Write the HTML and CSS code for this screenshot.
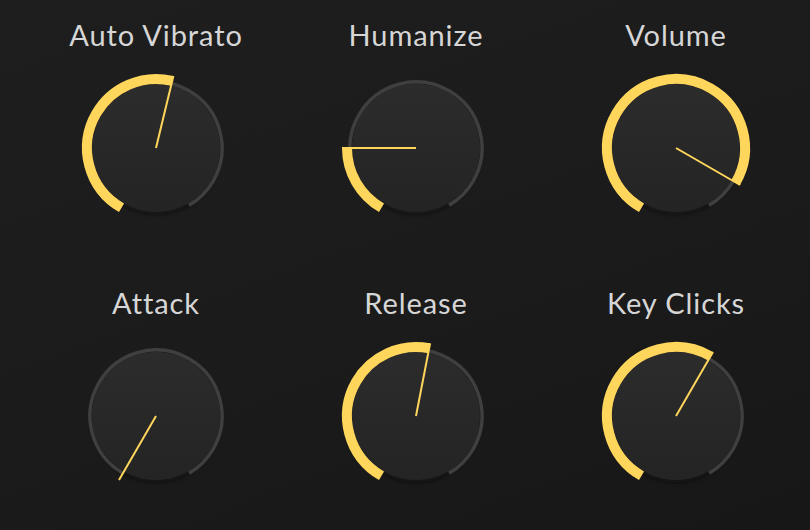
FILE: index.html
```html
<!DOCTYPE html>
<html lang="en">
<head>
  <meta charset="UTF-8">
  <title>Organ controls</title>
  <link rel="stylesheet" href="styles.css">
</head>
<body>
  <svg class="defs" width="0" height="0">
    <defs>
      <linearGradient id="face" x1="0" y1="0" x2="0" y2="1">
        <stop offset="0" stop-color="#2c2c2c"/>
        <stop offset="1" stop-color="#242424"/>
      </linearGradient>
      <filter id="soft" x="-20%" y="-20%" width="140%" height="140%">
        <feGaussianBlur stdDeviation="2"/>
      </filter>
    </defs>
  </svg>

  <div class="panel">
    <!-- value = degrees of the 300° sweep, needle = value - 150 -->
    <div class="knob">
      <div class="label">Auto Vibrato</div>
      <svg class="dial" viewBox="0 0 160 160" width="160" height="160">
        <circle class="shade" cx="80" cy="82" r="64"/>
        <circle class="face" cx="80" cy="80" r="64"/>
        <circle class="track" cx="80" cy="80" r="66" pathLength="360" transform="rotate(120 80 80)"/>
        <circle class="fill" cx="80" cy="80" r="69" pathLength="360" stroke-dasharray="163.6 360" transform="rotate(120 80 80)"/>
        <line class="needle" x1="80" y1="80" x2="80" y2="6" transform="rotate(13.6 80 80)"/>
      </svg>
    </div>

    <div class="knob">
      <div class="label">Humanize</div>
      <svg class="dial" viewBox="0 0 160 160" width="160" height="160">
        <circle class="shade" cx="80" cy="82" r="64"/>
        <circle class="face" cx="80" cy="80" r="64"/>
        <circle class="track" cx="80" cy="80" r="66" pathLength="360" transform="rotate(120 80 80)"/>
        <circle class="fill" cx="80" cy="80" r="69" pathLength="360" stroke-dasharray="60 360" transform="rotate(120 80 80)"/>
        <line class="needle" x1="80" y1="80" x2="80" y2="6" transform="rotate(-90 80 80)"/>
      </svg>
    </div>

    <div class="knob">
      <div class="label">Volume</div>
      <svg class="dial" viewBox="0 0 160 160" width="160" height="160">
        <circle class="shade" cx="80" cy="82" r="64"/>
        <circle class="face" cx="80" cy="80" r="64"/>
        <circle class="track" cx="80" cy="80" r="66" pathLength="360" transform="rotate(120 80 80)"/>
        <circle class="fill" cx="80" cy="80" r="69" pathLength="360" stroke-dasharray="270 360" transform="rotate(120 80 80)"/>
        <line class="needle" x1="80" y1="80" x2="80" y2="6" transform="rotate(120 80 80)"/>
      </svg>
    </div>

    <div class="knob">
      <div class="label">Attack</div>
      <svg class="dial" viewBox="0 0 160 160" width="160" height="160">
        <circle class="shade" cx="80" cy="82" r="64"/>
        <circle class="face" cx="80" cy="80" r="64"/>
        <circle class="track" cx="80" cy="80" r="66" pathLength="360" transform="rotate(120 80 80)"/>
        <line class="needle" x1="80" y1="80" x2="80" y2="6" transform="rotate(-150 80 80)"/>
      </svg>
    </div>

    <div class="knob">
      <div class="label">Release</div>
      <svg class="dial" viewBox="0 0 160 160" width="160" height="160">
        <circle class="shade" cx="80" cy="82" r="64"/>
        <circle class="face" cx="80" cy="80" r="64"/>
        <circle class="track" cx="80" cy="80" r="66" pathLength="360" transform="rotate(120 80 80)"/>
        <circle class="fill" cx="80" cy="80" r="69" pathLength="360" stroke-dasharray="161 360" transform="rotate(120 80 80)"/>
        <line class="needle" x1="80" y1="80" x2="80" y2="6" transform="rotate(11 80 80)"/>
      </svg>
    </div>

    <div class="knob">
      <div class="label">Key Clicks</div>
      <svg class="dial" viewBox="0 0 160 160" width="160" height="160">
        <circle class="shade" cx="80" cy="82" r="64"/>
        <circle class="face" cx="80" cy="80" r="64"/>
        <circle class="track" cx="80" cy="80" r="66" pathLength="360" transform="rotate(120 80 80)"/>
        <circle class="fill" cx="80" cy="80" r="69" pathLength="360" stroke-dasharray="180 360" transform="rotate(120 80 80)"/>
        <line class="needle" x1="80" y1="80" x2="80" y2="6" transform="rotate(30 80 80)"/>
      </svg>
    </div>
  </div>
</body>
</html>
```

FILE: styles.css
```css
html, body {
  height: 100%;
}

body {
  margin: 0;
  background: linear-gradient(160deg, #1e1e1e 0%, #1b1b1b 55%, #171717 100%);
  color: #d6d6d6;
  font-family: Lato, "Noto Sans", sans-serif;
  overflow: hidden;
}

.defs {
  display: block;
  width: 0;
  height: 0;
}

.panel {
  display: grid;
  grid-template-columns: repeat(3, 260px);
  row-gap: 57.5px;
  padding: 16.5px 0 0 26px;
}

.knob {
  display: flex;
  flex-direction: column;
  align-items: center;
}

.label {
  font-size: 29px;
  line-height: 36px;
  letter-spacing: 0.9px;
  margin-bottom: 15px;
  white-space: nowrap;
}

.dial {
  display: block;
}

.shade {
  fill: #101010;
  opacity: 0.7;
  filter: url(#soft);
}

.face {
  fill: url(#face);
}

.track {
  fill: none;
  stroke: #3f3f3f;
  stroke-width: 3.5;
  stroke-dasharray: 300 360;
}

.fill {
  fill: none;
  stroke: #ffd65c;
  stroke-width: 10;
}

.needle {
  stroke: #ffd65c;
  stroke-width: 2;
}
```
